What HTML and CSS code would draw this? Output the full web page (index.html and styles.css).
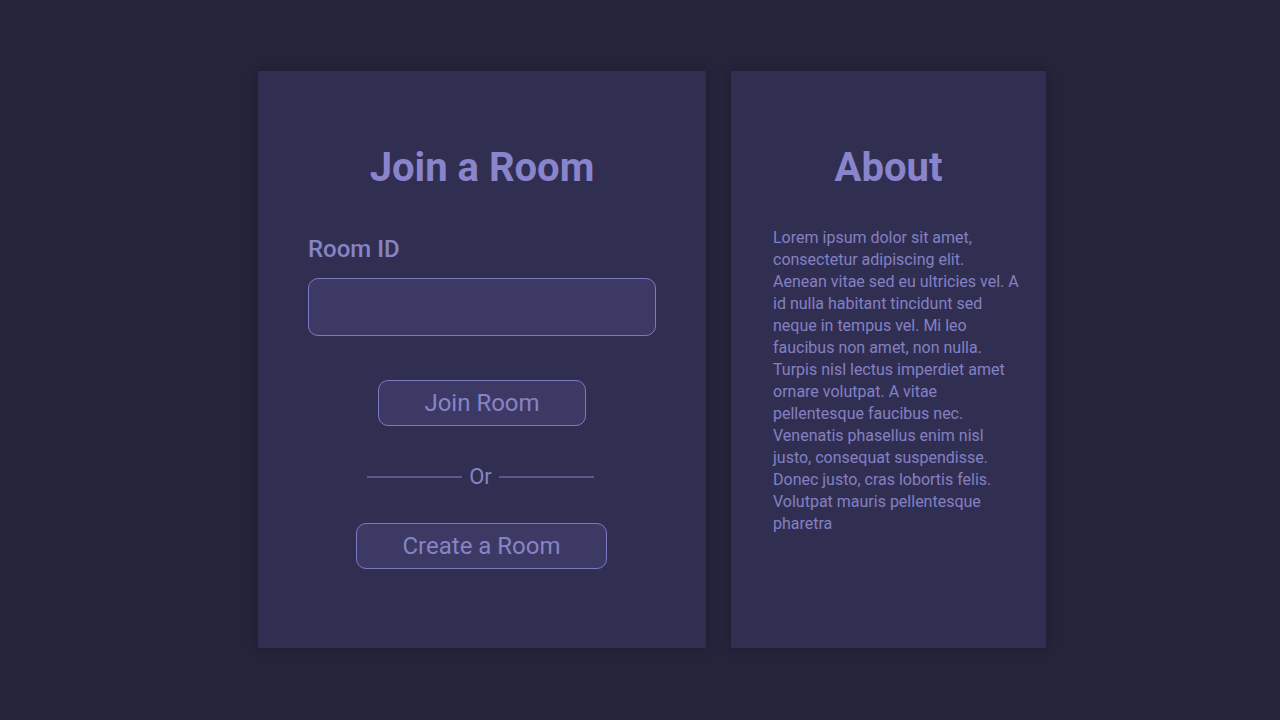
FILE: index.html
```html
<!DOCTYPE html>
<html>
<head>
<meta charset="utf-8">
<link rel="stylesheet" href="styles.css">
</head>
<body>
<main class="page">
  <section class="card join">
    <h1 class="title">Join a Room</h1>
    <label class="label" for="room">Room ID</label>
    <input class="input" id="room" type="text">
    <button class="btn btn-join">Join Room</button>
    <div class="divider"><span class="line"></span><span class="or">Or</span><span class="line"></span></div>
    <button class="btn btn-create">Create a Room</button>
  </section>
  <section class="card about">
    <h1 class="title">About</h1>
    <p class="text">Lorem ipsum dolor sit amet, consectetur adipiscing elit. Aenean vitae sed eu ultricies vel. A id nulla habitant tincidunt sed neque in tempus vel. Mi leo faucibus non amet, non nulla. Turpis nisl lectus imperdiet amet ornare volutpat. A vitae pellentesque faucibus nec. Venenatis phasellus enim nisl justo, consequat suspendisse. Donec justo, cras lobortis felis. Volutpat mauris pellentesque pharetra</p>
  </section>
</main>
</body>
</html>
```
FILE: styles.css
```css
* { box-sizing: border-box; }
html, body { margin: 0; height: 100%; }
body {
  background: #25243b;
  font-family: Roboto, "Noto Sans", sans-serif;
  color: #8683c6;
}
.page {
  display: flex;
  gap: 25px;
  padding: 71px 0 0 258px;
}
.card {
  background: #312f51;
  height: 577px;
  box-shadow: 0 0 12px rgba(0, 0, 0, 0.25);
  display: flex;
  flex-direction: column;
}
.join {
  width: 448px;
  padding: 73px 50px 0;
  align-items: center;
}
.about {
  width: 315px;
  padding: 73px 25px 0 42px;
}
.title {
  margin: 0;
  font-size: 40px;
  font-weight: 700;
  line-height: 47px;
  color: #8985cc;
  text-align: center;
}
.about .title { margin-left: -17px; }
.label {
  align-self: stretch;
  font-size: 24px;
  font-weight: 500;
  margin-top: 42px;
  line-height: 32px;
}
.input {
  align-self: stretch;
  height: 58px;
  margin-top: 13px;
  background: #3c3a64;
  border: 1px solid #7c79c2;
  border-radius: 10px;
  font-size: 20px;
  color: #8683c6;
  outline: none;
}
.btn {
  height: 46px;
  background: #3c3a64;
  border: 1px solid #7c79c2;
  border-radius: 10px;
  font-family: Roboto, "Noto Sans", sans-serif;
  font-size: 24px;
  color: #8683c6;
  padding: 0;
}
.btn-join { width: 208px; margin-top: 44px; }
.btn-create { width: 251px; margin-top: 0; margin-right: 1px; }
.divider {
  display: flex;
  align-items: center;
  gap: 7px;
  height: 97px;
  padding-top: 4px;
  margin-right: 3px;
}
.line {
  width: 95px;
  height: 2px;
  background: #5b5895;
}
.or { font-size: 22px; line-height: 26px; }
.text {
  margin: 36px 0 0;
  font-size: 16px;
  line-height: 22px;
  color: #8480c3;
}
```
